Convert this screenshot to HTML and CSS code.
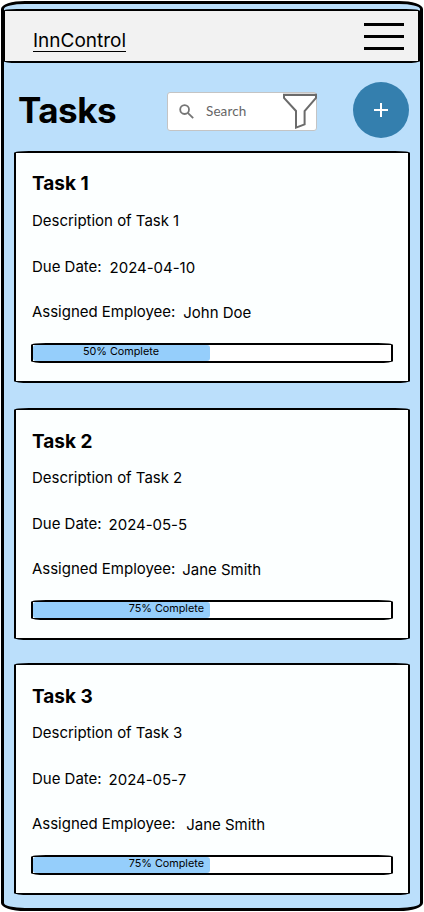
FILE: index.html
```html
<!DOCTYPE html>
<html lang="en">
<head>
<meta charset="utf-8">
<title>InnControl</title>
<link rel="stylesheet" href="styles.css">
</head>
<body>
<div class="frame">
  <header class="topbar">
    <a class="brand">InnControl</a>
    <div class="menu"><i></i><i></i><i></i></div>
  </header>
  <div class="toolbar">
    <h1>Tasks</h1>
    <div class="search">
      <svg class="lens" width="16" height="16" viewBox="0 0 16 16"><circle cx="5.6" cy="5.6" r="4.4"/><path d="M8.8 8.8L14.2 14.2"/></svg>
      <span>Search</span>
      <svg class="funnel" width="34" height="36" viewBox="0 0 34 36"><path d="M1 1.8H33V4.8L21.6 18V31.4L13 34.6V18L1 4.8Z"/><path d="M1 2H33"/></svg>
    </div>
    <div class="add"><svg width="14" height="14" viewBox="0 0 14 14"><path d="M7 0V14M0 7H14"/></svg></div>
  </div>
  <main>
    <section class="card">
      <h2>Task 1</h2>
      <p class="desc">Description of Task 1</p>
      <p class="due">Due Date: <span class="value date">2024-04-10</span></p>
      <p class="who">Assigned Employee: <span class="value">John Doe</span></p>
      <div class="progress"><div class="fill half">50% Complete</div></div>
    </section>
    <section class="card second">
      <h2>Task 2</h2>
      <p class="desc">Description of Task 2</p>
      <p class="due">Due Date: <span class="value">2024-05-5</span></p>
      <p class="who">Assigned Employee: <span class="value near">Jane Smith</span></p>
      <div class="progress"><div class="fill">75% Complete</div></div>
    </section>
    <section class="card third">
      <h2>Task 3</h2>
      <p class="desc">Description of Task 3</p>
      <p class="due">Due Date: <span class="value">2024-05-7</span></p>
      <p class="who">Assigned Employee: <span class="value far">Jane Smith</span></p>
      <div class="progress"><div class="fill">75% Complete</div></div>
    </section>
  </main>
</div>
</body>
</html>
```
FILE: styles.css
```css
* { box-sizing: border-box; }
body { margin: 0; background: #fff; font-family: Inter, sans-serif; color: #000; }
h1, h2, p { margin: 0; }
.frame {
  width: 422px; height: 910px; margin: 1px 0 0 1px;
  border: 3px solid #000; border-radius: 24px / 8px;
  background: #bbdffb; padding-top: 5px;
}
.topbar {
  height: 54px; width: 417px; margin: 0 0 0 -1px; padding: 0 14px 0 28px;
  border: 2px solid #000; border-radius: 14px / 2px; background: #f2f2f2;
  display: flex; justify-content: space-between;
}
.brand { margin-top: 18px; height: 23px; line-height: 24px; font-size: 19px; border-bottom: 1px solid #000; }
.menu { margin-top: 12px; width: 40px; display: flex; flex-direction: column; gap: 9px; }
.menu i { height: 3px; background: #000; }
.toolbar { height: 88px; display: flex; padding-left: 15px; align-items: flex-start; }
h1 { width: 148px; margin-top: 25px; font-size: 35px; line-height: 44px; font-weight: 700; text-indent: -1px; letter-spacing: -.5px; }
.search {
  width: 150px; height: 39px; margin-top: 29px; padding-left: 11px;
  background: #fff; border: 1px solid #c4c4c4; border-radius: 3px;
  display: flex; align-items: center;
}
.search span { flex: none; width: 79px; padding-left: 11px; margin-top: -1px; font: 13.5px/20px Lato, sans-serif; color: #666; letter-spacing: .1px; }
.search svg { fill: none; stroke: #757575; stroke-width: 2; flex: none; }
.search .lens { stroke-width: 1.8; }
.search .funnel { margin: -1px 0 0 9px; stroke: #6b6b6b; stroke-width: 2; }
.add {
  width: 56px; height: 56px; margin: 19px 0 0 36px; border-radius: 50%; background: #347fae;
  display: flex; align-items: center; justify-content: center;
}
.add path { stroke: #fff; stroke-width: 2; }
.card {
  width: 396px; height: 232px; margin-left: 10px; padding: 19px 15px 0 15px;
  border: 2px solid #000; border-radius: 15px / 2px; background: #fcffff;
}
.second { margin-top: 25px; padding-top: 20px; }
.third { margin-top: 23px; padding-top: 20px; }
h2 { padding-left: 1px; font-size: 19px; line-height: 24px; font-weight: 700; }
.card p { padding-left: 1px; font-size: 15px; line-height: 20px; display: flex; letter-spacing: -.02px; }
.card .desc { margin-top: 15px; }
.second .desc, .third .desc { margin-top: 14px; }
.card .due { margin-top: 26px; }
.card .who { margin-top: 25px; }
.value { margin: 1px 0 -1px 8px; }
.second .value, .third .value { margin-left: 7px; }
.second .near { margin-left: 7px; }
.third .far { margin-left: 11px; }
.progress {
  width: 362px; height: 20px; margin-top: 21px;
  border: 2px solid #000; border-radius: 15px / 2px; background: #fff;
}
.fill {
  width: 177px; height: 16px; padding-right: 6px; background: #95cefb; border-radius: 3px;
  font-size: 10.8px; line-height: 13px; text-align: right;
}
.half { padding-right: 51px; }
```
